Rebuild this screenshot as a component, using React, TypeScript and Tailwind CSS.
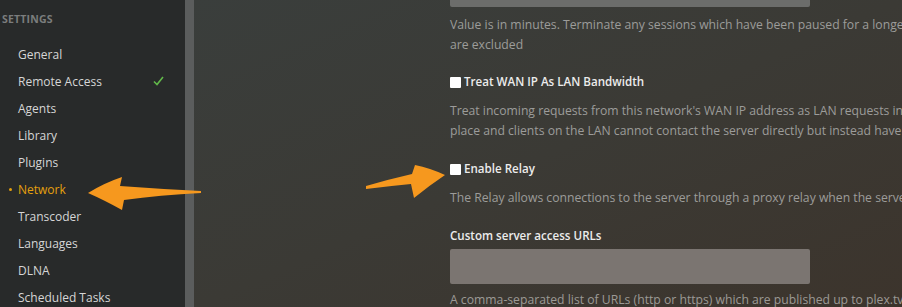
import React from 'react';

const navItems = [
  'General',
  'Remote Access',
  'Agents',
  'Library',
  'Plugins',
  'Network',
  'Transcoder',
  'Languages',
  'DLNA',
  'Scheduled Tasks',
];

function Checkbox() {
  return <span className="inline-block w-[11px] h-[11px] bg-white rounded-[1px] mr-[3px] shrink-0" />;
}

export default function App() {
  return (
    <div className="relative flex w-[902px] h-[307px] overflow-hidden font-['Open_Sans',sans-serif]">
      {/* sidebar */}
      <div className="w-[185px] shrink-0 bg-[#282a2a]">
        <div className="pl-[2px] pt-[11px] text-[10.5px] font-bold tracking-[0.2px] text-[#7b7d7d] leading-4">SETTINGS</div>
        <ul className="mt-[14px]">
          {navItems.map((item) => (
            <li key={item} className="relative h-[27px] flex items-center pl-[18px] text-[12px] font-medium">
              {item === 'Network' && (
                <span className="absolute left-[9px] top-[12px] w-[3px] h-[3px] rounded-full bg-[#e5a00d]" />
              )}
              <span className={item === 'Network' ? 'text-[#e5a00d]' : 'text-[#d6d6d6]'}>{item}</span>
              {item === 'Remote Access' && (
                <svg className="absolute left-[153px] top-[8px]" width="11" height="10" viewBox="0 0 11 10">
                  <path d="M1 5.5 L4 8.5 L10 1" fill="none" stroke="#62b94a" strokeWidth="1.6" />
                </svg>
              )}
            </li>
          ))}
        </ul>
      </div>
      {/* scrollbar */}
      <div className="w-[9px] shrink-0 bg-[#5b5d5d]" />
      {/* main */}
      <div className="flex-1 min-w-0 bg-gradient-to-br from-[#3a3e3c] via-[#3b3a35] to-[#3c342c] pl-[256px] overflow-hidden">
        <div className="w-[360px] h-[36px] -mt-[29px] bg-[#6c6d6b] rounded-[2px]" />
        <p className="mt-[8px] text-[12.2px] leading-5 text-[#9c9c9a] whitespace-nowrap">
          Value is in minutes. Terminate any sessions which have been paused for a longer period of time. Sessions
          <br />
          are excluded
        </p>
        <label className="mt-[17px] h-5 flex items-center text-[11.6px] font-semibold text-[#ececec] whitespace-nowrap">
          <Checkbox />
          Treat WAN IP As LAN Bandwidth
        </label>
        <p className="mt-[9px] text-[12.2px] leading-5 text-[#9c9c9a] whitespace-nowrap">
          Treat incoming requests from this network's WAN IP address as LAN requests in terms of bandwidth. This often happens when
          <br />
          place and clients on the LAN cannot contact the server directly but instead have to talk to it through the router
        </p>
        <label className="mt-[18px] h-5 flex items-center text-[11.6px] font-semibold text-[#ececec] whitespace-nowrap">
          <Checkbox />
          Enable Relay
        </label>
        <p className="mt-[9px] text-[12.2px] leading-5 text-[#9c9c9a] whitespace-nowrap">
          The Relay allows connections to the server through a proxy relay when the server is not accessible otherwise.
        </p>
        <div className="mt-[18px] h-5 flex items-center text-[11.6px] font-semibold text-[#ececec] whitespace-nowrap">
          Custom server access URLs
        </div>
        <div className="mt-[3px] w-[360px] h-[35px] bg-[#7b7571] rounded-[2px]" />
        <p className="mt-[6px] text-[12.2px] leading-5 text-[#9c9a96] whitespace-nowrap">
          A comma-separated list of URLs (http or https) which are published up to plex.tv for server discovery.
        </p>
      </div>
      {/* annotation arrows */}
      <svg className="absolute left-0 top-0 pointer-events-none" width="902" height="307" viewBox="0 0 902 307">
        <path
          d="M88 193 Q104 183 122 177 L120 186 Q160 189 201 191 L201 193 Q160 195 124 200 L122 210 Q104 200 88 193 Z"
          fill="#f6981e"
        />
        <path
          d="M445 175 Q430 168 415 165 L412 174 Q390 179 366 186 L366 189 Q390 186 411 184 L414 198 Q430 185 445 175 Z"
          fill="#f6981e"
        />
      </svg>
    </div>
  );
}
